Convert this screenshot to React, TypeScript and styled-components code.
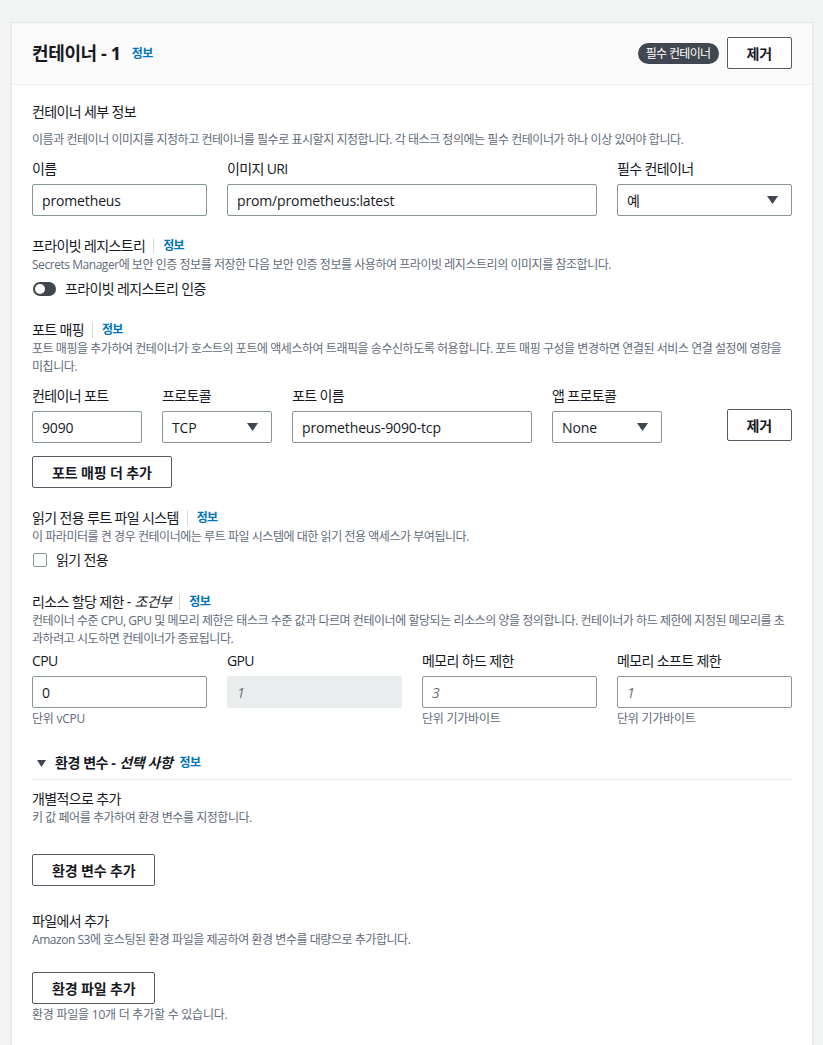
import React from 'react';
import styled, { createGlobalStyle } from 'styled-components';

const GlobalStyle = createGlobalStyle`
    body {
        margin: 0;
        background: #f2f3f3;
        font-family: 'Open Sans', 'Noto Sans CJK KR', sans-serif;
        letter-spacing: -0.04em;
        color: #16191f;
    }
`;

const Page = styled.div`
    padding: 22px 10px 0 11px;
`;

const Card = styled.section`
    background: #ffffff;
    border: 1px solid #e4e7e7;
    border-bottom: none;
    box-shadow: 0 1px 1px 0 rgba(0, 28, 36, 0.08);
`;

const CardHeader = styled.header`
    display: flex;
    align-items: center;
    gap: 8px;
    padding: 14px 20px 15px;
    background: #fafafa;
    border-bottom: 1px solid #eaeded;
`;

const CardTitle = styled.h2`
    margin: 0;
    font-size: 18px;
    line-height: 22px;
    font-weight: 700;
    letter-spacing: -0.02em;
`;

const HeaderInfo = styled.a`
    margin-left: 3px;
    flex: 1;
    font-size: 12px;
    font-weight: 700;
    color: #0073bb;
    text-decoration: none;
`;

const Badge = styled.span`
    display: inline-flex;
    align-items: center;
    height: 21px;
    padding: 0 8px;
    border-radius: 11px;
    background: #414750;
    color: #ffffff;
    font-size: 12px;
`;

const Button = styled.button<{ $mt?: number }>`
    height: 32px;
    margin-top: ${props => props.$mt ?? 0}px;
    padding: 0 19px;
    background: #ffffff;
    border: 1px solid #545b64;
    border-radius: 2px;
    color: #16191f;
    font-family: inherit;
    font-size: 14px;
    font-weight: 700;
    letter-spacing: -0.01em;
    cursor: pointer;
    white-space: nowrap;
`;

const CardBody = styled.div`
    display: flex;
    flex-direction: column;
    align-items: flex-start;
    padding: 17px 20px 40px;
`;

const SectionTitle = styled.div<{ $mt?: number }>`
    display: flex;
    align-items: center;
    margin-top: ${props => props.$mt ?? 0}px;
    font-size: 14px;
    line-height: 20px;
    font-weight: 400;

    em {
        font-style: italic;
        margin-left: 4px;
    }
`;

const InfoSep = styled.span`
    width: 1px;
    height: 16px;
    margin: 0 9px 0 8px;
    background: #d5dbdb;
`;

const InfoLink = styled.a`
    font-size: 12px;
    font-weight: 700;
    color: #0073bb;
    text-decoration: none;
`;

const Description = styled.p<{ $mt?: number }>`
    margin: ${props => props.$mt ?? 0}px 0 0;
    font-size: 12px;
    line-height: 18px;
    letter-spacing: -0.038em;
    color: #5f6b7a;
    word-break: break-all;
`;

const FieldGrid = styled.div<{ $cols: string; $mt?: number }>`
    display: grid;
    align-self: stretch;
    grid-template-columns: ${props => props.$cols};
    column-gap: 20px;
    align-items: end;
    margin-top: ${props => props.$mt ?? 0}px;
`;

const Field = styled.div`
    display: flex;
    flex-direction: column;
    min-width: 0;
`;

const Label = styled.label`
    margin-bottom: 4px;
    font-size: 14px;
    line-height: 22px;
    font-weight: 400;
`;

const TextInput = styled.input`
    box-sizing: border-box;
    width: 100%;
    height: 32px;
    padding: 0 9px;
    border: 1px solid #879596;
    border-radius: 2px;
    background: #ffffff;
    color: #16191f;
    font-family: inherit;
    font-size: 14px;
    letter-spacing: -0.01em;
    outline: none;

    &::placeholder {
        color: #687078;
        font-style: italic;
    }

    &:disabled {
        background: #eaeded;
        border-color: #eaeded;
    }
`;

const SelectBox = styled.div`
    box-sizing: border-box;
    display: flex;
    align-items: center;
    justify-content: space-between;
    height: 32px;
    padding: 0 13px 0 9px;
    border: 1px solid #879596;
    border-radius: 2px;
    font-size: 14px;
    letter-spacing: -0.01em;
`;

const Hint = styled.span`
    margin-top: 3px;
    font-size: 12px;
    line-height: 16px;
    letter-spacing: -0.02em;
    color: #5f6b7a;
`;

const EndCell = styled.div`
    justify-self: end;
    padding-bottom: 2px;
`;

const ToggleRow = styled.label<{ $mt?: number }>`
    display: flex;
    align-items: center;
    gap: 9px;
    margin-top: ${props => props.$mt ?? 0}px;
    font-size: 14px;
    line-height: 22px;
`;

const ToggleTrack = styled.span`
    position: relative;
    width: 23px;
    height: 14px;
    margin-left: 1px;
    border-radius: 7px;
    background: #414750;
`;

const ToggleKnob = styled.span`
    position: absolute;
    top: 2px;
    left: 2px;
    width: 10px;
    height: 10px;
    border-radius: 50%;
    background: #ffffff;
`;

const CheckBox = styled.span`
    box-sizing: border-box;
    width: 14px;
    height: 14px;
    margin-left: 1px;
    border: 1px solid #879596;
    border-radius: 2px;
`;

const ExpandHeader = styled.div`
    display: flex;
    align-items: center;
    align-self: stretch;
    margin-top: 26px;
    padding: 0 0 6px 5px;
    border-bottom: 1px solid #eaeded;
    font-size: 14px;
    line-height: 20px;
    font-weight: 700;
    letter-spacing: -0.03em;

    em {
        margin: 0 7px 0 4px;
    }
`;

const ExpandCaret = styled.svg`
    margin-right: 9px;
`;

const Caret = () => (
    <svg width="11" height="8" viewBox="0 0 11 8">
        <polygon points="0,0 11,0 5.5,8" fill="#414750" />
    </svg>
);

const Select: React.FC<{ value: string }> = ({ value }) => (
    <SelectBox>
        <span>{value}</span>
        <Caret />
    </SelectBox>
);

const Info: React.FC = () => (
    <>
        <InfoSep />
        <InfoLink href="#">정보</InfoLink>
    </>
);

export default function App() {
    return (
        <Page>
            <GlobalStyle />
            <Card>
                <CardHeader>
                    <CardTitle>컨테이너 - 1</CardTitle>
                    <HeaderInfo href="#">정보</HeaderInfo>
                    <Badge>필수 컨테이너</Badge>
                    <Button>제거</Button>
                </CardHeader>

                <CardBody>
                    <SectionTitle>컨테이너 세부 정보</SectionTitle>
                    <Description $mt={9}>
                        이름과 컨테이너 이미지를 지정하고 컨테이너를 필수로 표시할지 지정합니다. 각 태스크
                        정의에는 필수 컨테이너가 하나 이상 있어야 합니다.
                    </Description>
                    <FieldGrid $cols="175px 1fr 175px" $mt={9}>
                        <Field>
                            <Label>이름</Label>
                            <TextInput defaultValue="prometheus" />
                        </Field>
                        <Field>
                            <Label>이미지 URI</Label>
                            <TextInput defaultValue="prom/prometheus:latest" />
                        </Field>
                        <Field>
                            <Label>필수 컨테이너</Label>
                            <Select value="예" />
                        </Field>
                    </FieldGrid>

                    <SectionTitle $mt={20}>
                        프라이빗 레지스트리
                        <Info />
                    </SectionTitle>
                    <Description>
                        Secrets Manager에 보안 인증 정보를 저장한 다음 보안 인증 정보를 사용하여 프라이빗
                        레지스트리의 이미지를 참조합니다.
                    </Description>
                    <ToggleRow $mt={4}>
                        <ToggleTrack>
                            <ToggleKnob />
                        </ToggleTrack>
                        프라이빗 레지스트리 인증
                    </ToggleRow>

                    <SectionTitle $mt={20}>
                        포트 매핑
                        <Info />
                    </SectionTitle>
                    <Description>
                        포트 매핑을 추가하여 컨테이너가 호스트의 포트에 액세스하여 트래픽을 송수신하도록
                        허용합니다. 포트 매핑 구성을 변경하면 연결된 서비스 연결 설정에 영향을 미칩니다.
                    </Description>
                    <FieldGrid $cols="110px 110px 240px 110px 1fr" $mt={9}>
                        <Field>
                            <Label>컨테이너 포트</Label>
                            <TextInput defaultValue="9090" />
                        </Field>
                        <Field>
                            <Label>프로토콜</Label>
                            <Select value="TCP" />
                        </Field>
                        <Field>
                            <Label>포트 이름</Label>
                            <TextInput defaultValue="prometheus-9090-tcp" />
                        </Field>
                        <Field>
                            <Label>앱 프로토콜</Label>
                            <Select value="None" />
                        </Field>
                        <EndCell>
                            <Button>제거</Button>
                        </EndCell>
                    </FieldGrid>
                    <Button $mt={13}>포트 매핑 더 추가</Button>

                    <SectionTitle $mt={20}>
                        읽기 전용 루트 파일 시스템
                        <Info />
                    </SectionTitle>
                    <Description>
                        이 파라미터를 켠 경우 컨테이너에는 루트 파일 시스템에 대한 읽기 전용 액세스가
                        부여됩니다.
                    </Description>
                    <ToggleRow $mt={3}>
                        <CheckBox />
                        읽기 전용
                    </ToggleRow>

                    <SectionTitle $mt={21}>
                        리소스 할당 제한 - <em>조건부</em>
                        <Info />
                    </SectionTitle>
                    <Description>
                        컨테이너 수준 CPU, GPU 및 메모리 제한은 태스크 수준 값과 다르며 컨테이너에 할당되는
                        리소스의 양을 정의합니다. 컨테이너가 하드 제한에 지정된 메모리를 초과하려고 시도하면
                        컨테이너가 종료됩니다.
                    </Description>
                    <FieldGrid $cols="repeat(4, 1fr)" $mt={2}>
                        <Field>
                            <Label>CPU</Label>
                            <TextInput defaultValue="0" />
                            <Hint>단위 vCPU</Hint>
                        </Field>
                        <Field>
                            <Label>GPU</Label>
                            <TextInput placeholder="1" disabled />
                            <Hint>&nbsp;</Hint>
                        </Field>
                        <Field>
                            <Label>메모리 하드 제한</Label>
                            <TextInput placeholder="3" />
                            <Hint>단위 기가바이트</Hint>
                        </Field>
                        <Field>
                            <Label>메모리 소프트 제한</Label>
                            <TextInput placeholder="1" />
                            <Hint>단위 기가바이트</Hint>
                        </Field>
                    </FieldGrid>

                    <ExpandHeader>
                        <ExpandCaret width="9" height="7" viewBox="0 0 9 7">
                            <polygon points="0,0 9,0 4.5,7" fill="#414750" />
                        </ExpandCaret>
                        환경 변수 - <em>선택 사항</em>
                        <InfoLink href="#">정보</InfoLink>
                    </ExpandHeader>

                    <SectionTitle $mt={9}>개별적으로 추가</SectionTitle>
                    <Description>키 값 페어를 추가하여 환경 변수를 지정합니다.</Description>
                    <Button $mt={27}>환경 변수 추가</Button>

                    <SectionTitle $mt={25}>파일에서 추가</SectionTitle>
                    <Description>
                        Amazon S3에 호스팅된 환경 파일을 제공하여 환경 변수를 대량으로 추가합니다.
                    </Description>
                    <Button $mt={23}>환경 파일 추가</Button>
                    <Hint>환경 파일을 10개 더 추가할 수 있습니다.</Hint>
                </CardBody>
            </Card>
        </Page>
    );
}
